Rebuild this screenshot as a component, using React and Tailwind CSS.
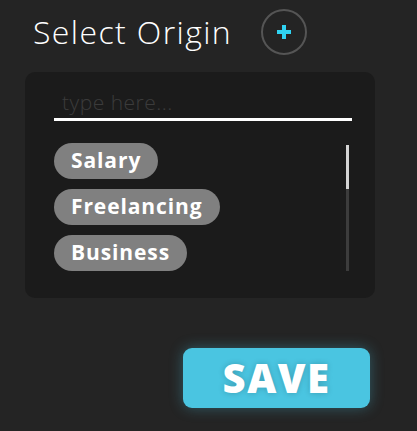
import React, { useState } from "react";

const origins = ["Salary", "Freelancing", "Business"];

const App = () => {
  const [query, setQuery] = useState("");

  return (
    <div
      className="w-[417px] h-[431px] bg-[#242424] overflow-hidden"
      style={{ fontFamily: '"Open Sans", "Liberation Sans", sans-serif' }}
    >
      <div className="flex items-center pt-[9px] pl-[33px]">
        <h2 className="text-[32px] font-light text-white tracking-[1.4px] leading-none">
          Select Origin
        </h2>
        <button className="ml-[29px] w-[46px] h-[46px] rounded-full border-2 border-[#555] flex items-center justify-center">
          <svg width="14" height="14" viewBox="0 0 14 14">
            <path d="M7 0v14M0 7h14" stroke="#2fd3f2" strokeWidth="4" />
          </svg>
        </button>
      </div>

      <div className="mt-[17px] ml-[25px] w-[350px] rounded-[10px] bg-[#1b1b1b] pl-[29px] pr-[23px] pt-[14px] pb-[27px]">
        <input
          value={query}
          onChange={(e) => setQuery(e.target.value)}
          placeholder="type here..."
          className="w-full h-[35px] bg-transparent border-b-[3px] border-white px-[8px] text-[21px] font-light tracking-[0.5px] text-white placeholder:text-[#3b3b3b] outline-none"
        />
        <div className="flex mt-[22px]">
          <div className="flex-1 flex flex-col items-start gap-[10px]">
            {origins.map((item) => (
              <span
                key={item}
                className="h-[36px] px-[17px] rounded-full bg-[#808080] text-white text-[21px] font-bold tracking-[0.9px] flex items-center"
              >
                {item}
              </span>
            ))}
          </div>
          <div className="w-[3px] mt-[2px] mr-[3px] h-[126px] bg-[#3c3c3c] flex flex-col">
            <div className="h-[44px] bg-[#d4d4d4]" />
          </div>
        </div>
      </div>

      <div className="flex justify-end pr-[47px] mt-[50px]">
        <button className="w-[187px] h-[60px] rounded-[9px] bg-[#4ac5e1] text-white text-[40px] leading-none font-extrabold tracking-[1.5px] shadow-[0_0_14px_rgba(74,197,225,0.35)] [text-shadow:0_0_6px_rgba(0,0,0,0.2)]">
          SAVE
        </button>
      </div>
    </div>
  );
};

export default App;
